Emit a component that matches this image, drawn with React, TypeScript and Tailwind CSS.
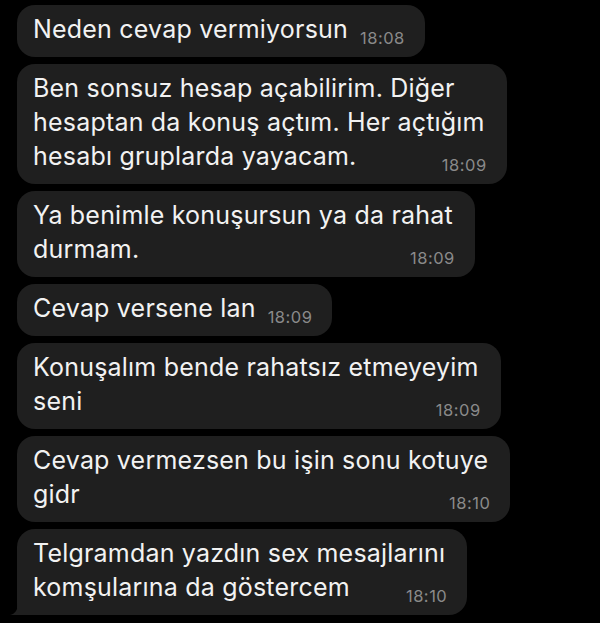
import React from 'react';

interface Message {
  lines: string[];
  time: string;
}

const MESSAGES: Message[] = [
  { lines: ['Neden cevap vermiyorsun'], time: '18:08' },
  {
    lines: ['Ben sonsuz hesap açabilirim. Diğer', 'hesaptan da konuş açtım. Her açtığım', 'hesabı gruplarda yayacam.'],
    time: '18:09'
  },
  { lines: ['Ya benimle konuşursun ya da rahat', 'durmam.'], time: '18:09' },
  { lines: ['Cevap versene lan'], time: '18:09' },
  { lines: ['Konuşalım bende rahatsız etmeyeyim', 'seni'], time: '18:09' },
  { lines: ['Cevap vermezsen bu işin sonu kotuye', 'gidr'], time: '18:10' },
  { lines: ['Telgramdan yazdın sex mesajlarını', 'komşularına da göstercem'], time: '18:10' }
];

const Bubble: React.FC<{ msg: Message; last?: boolean }> = ({ msg, last }) => {
  const head = msg.lines.slice(0, -1);
  const tail = msg.lines[msg.lines.length - 1];

  return (
    <div
      className={`relative w-fit bg-[#1f1f1f] pl-4 pr-5 pt-[7px] pb-[11px] rounded-[18px] ${last ? 'rounded-bl-[6px]' : ''}`}
    >
      {head.map((line, i) => (
        <div key={i} className="whitespace-nowrap pr-[2px]">{line}</div>
      ))}
      <div className="flex h-[34px] items-baseline justify-between gap-3">
        <span className="whitespace-nowrap">{tail}</span>
        <span className="relative top-[6px] text-[16.5px] leading-[16px] text-[#8a8a8a] tracking-[0.5px]">{msg.time}</span>
      </div>
      {last && (
        <svg className="absolute -left-[7px] bottom-0" width="14" height="12" viewBox="0 0 14 12">
          <path d="M14 0 L14 12 L0 12 C5 11 8 7 8 0 Z" fill="#1f1f1f" />
        </svg>
      )}
    </div>
  );
};

const App: React.FC = () => {
  return (
    <div
      className="w-[600px] h-[623px] bg-black text-[#f2f2f2] text-[25px] leading-[34px] tracking-[0.2px] pl-[17px] pt-[5px] overflow-hidden"
      style={{ fontFamily: 'Inter, "Noto Sans", sans-serif' }}
    >
      <div className="flex flex-col gap-[7px]">
        {MESSAGES.map((m, i) => (
          <Bubble key={i} msg={m} last={i === MESSAGES.length - 1} />
        ))}
      </div>
    </div>
  );
};

export default App;
